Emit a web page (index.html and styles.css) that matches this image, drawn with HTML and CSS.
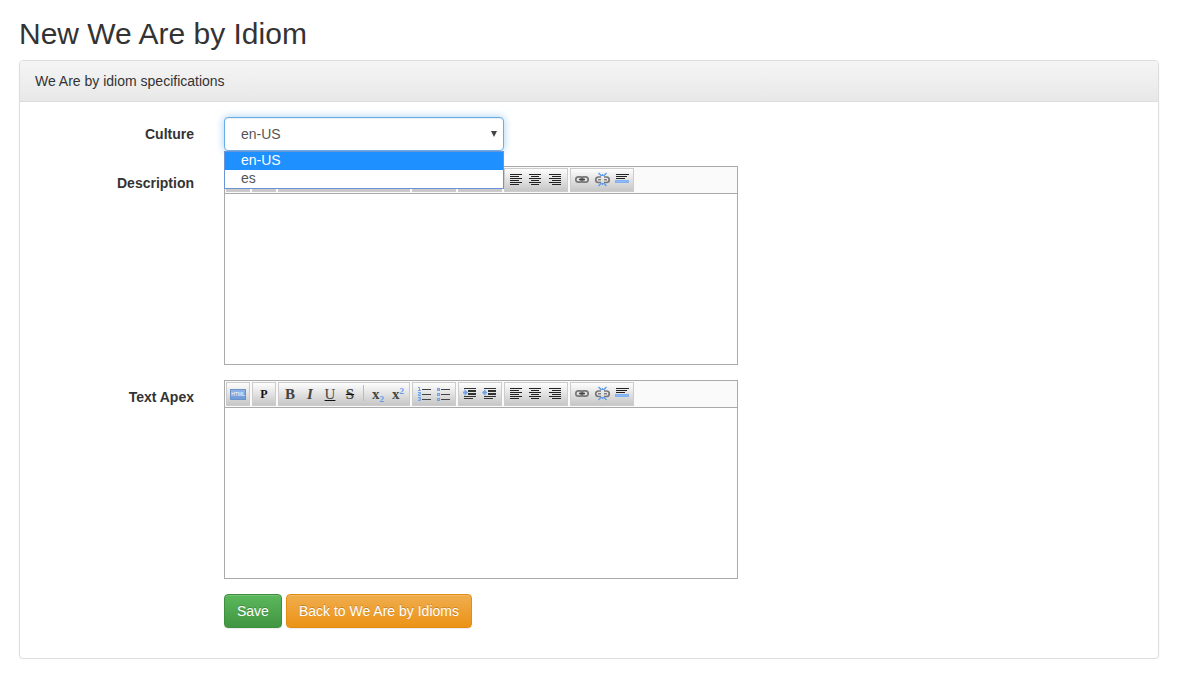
FILE: index.html
```
<!DOCTYPE html>
<html lang="en">
<head>
    <meta charset="UTF-8">
    <meta name="viewport" content="width=device-width, initial-scale=1.0">
    <title>New We Are by Idiom</title>
    <link rel="stylesheet" href="styles.css">
</head>
<body>
    <!-- Toolbar icons -->
    <svg class="icon-defs" aria-hidden="true">
        <symbol id="ol" viewBox="0 0 20 20">
            <path d="M8 5.5h9M8 10.5h9M8 15.5h9" stroke="#444"/>
            <path d="M4 3.5h1.500v3M4 6.500h3M4 8.500h2.500v1.500h-2v1.500h2.500M4 13.500h2.500v3h-2.500M4.500 15h2" fill="none" stroke="#6ea3e6"/>
        </symbol>
        <symbol id="ul" viewBox="0 0 20 20">
            <path d="M7 5.5h9M7 10.5h9M7 15.5h9" stroke="#444"/>
            <path d="M3 4h3v3h-3zM3 9h3v3h-3zM3 14h3v3h-3z" fill="#6ea3e6"/>
            <path d="M4 5h1v1h-1zM4 10h1v1h-1zM4 15h1v1h-1z" fill="#b5d0f4"/>
        </symbol>
        <symbol id="indent" viewBox="0 0 20 20">
            <path d="M4 4.500h12M4 12.500h12M4 14.500h9" stroke="#333"/>
            <path d="M8 7h8M8 10h8" stroke="#333" stroke-width="2"/>
            <path d="M3 7.500h1.500v-2.500l3.500 3.500l-3.500 3.500v-2.500h-1.500z" fill="#6ea3e6"/>
        </symbol>
        <symbol id="outdent" viewBox="0 0 20 20">
            <path d="M4 4.500h12M4 12.500h12M4 14.500h9" stroke="#333"/>
            <path d="M8 7h8M8 10h8" stroke="#333" stroke-width="2"/>
            <path d="M7 7.500h-1.500v-2.500l-3.500 3.500l3.500 3.500v-2.500h1.500z" fill="#6ea3e6"/>
        </symbol>
        <symbol id="left" viewBox="0 0 20 20">
            <path d="M4 4.500h12M4 6.500h9M4 8.500h12M4 10.500h9M4 12.500h12M4 14.500h9" stroke="#222"/>
        </symbol>
        <symbol id="center" viewBox="0 0 20 20">
            <path d="M3 4.500h12M5 6.500h8M3 8.500h12M5 10.500h8M3 12.500h12M5 14.500h8" stroke="#222"/>
        </symbol>
        <symbol id="right" viewBox="0 0 20 20">
            <path d="M3 4.500h12M6 6.500h9M3 8.500h12M6 10.500h9M3 12.500h12M6 14.500h9" stroke="#222"/>
        </symbol>
        <symbol id="link" viewBox="0 0 20 20">
            <rect x="3.800" y="6.800" width="7" height="5.400" rx="2.700" fill="none" stroke="#777" stroke-width="1.700"/>
            <rect x="9.200" y="6.800" width="7" height="5.400" rx="2.700" fill="none" stroke="#777" stroke-width="1.700"/>
            <path d="M7 9.500h6" stroke="#444" stroke-width="1.500"/>
        </symbol>
        <symbol id="unlink" viewBox="0 0 20 20">
            <path d="M9 7h-2.500a2.700 2.700 0 0 0 0 5.500h2.500M12 7h2.500a2.700 2.700 0 0 1 0 5.500h-2.500" fill="none" stroke="#777" stroke-width="1.700"/>
            <path d="M6 9.800h3M12 9.800h3" stroke="#555"/>
            <path d="M6.500 3l3 3M14.500 3l-3 3M10.500 4v2M6.500 16l3-3M14.500 16l-3-3M10.500 13v2" stroke="#5f9bea" stroke-width="1.400"/>
        </symbol>
        <symbol id="rule" viewBox="0 0 20 20">
            <path d="M4 4.500h13M4 6.500h11M4 8.500h9" stroke="#222"/>
            <path d="M3 10h14v3h-14z" fill="#7fb0f0"/>
            <path d="M4 11h12v1h-12z" fill="#8fbaf4"/>
        </symbol>
    </svg>

    <div class="container">
        <h1>New We Are by Idiom</h1>

        <div class="panel">
            <div class="panel-heading">We Are by idiom specifications</div>
            <form class="panel-body">
                <div class="form-group">
                    <label for="culture">Culture</label>
                    <div class="select-wrap">
                        <select id="culture">
                            <option selected>en-US</option>
                            <option>es</option>
                        </select>
                        <ul class="options">
                            <li class="active">en-US</li>
                            <li>es</li>
                        </ul>
                    </div>
                </div>

                <div class="form-group">
                    <label for="description">Description</label>
                    <div class="editor">
                        <div class="toolbar">
                            <div class="group">
                                <button type="button" title="View source"><span class="html">HTML</span></button>
                            </div>
                            <div class="group">
                                <button type="button" title="Paragraph" class="para">P</button>
                            </div>
                            <div class="group">
                                <button type="button" title="Bold"><b>B</b></button>
                                <button type="button" title="Italic"><i>I</i></button>
                                <button type="button" title="Underline"><u>U</u></button>
                                <button type="button" title="Strikethrough"><s>S</s></button>
                                <span class="separator"></span>
                                <button type="button" title="Subscript">x<sub>2</sub></button>
                                <button type="button" title="Superscript">x<sup>2</sup></button>
                            </div>
                            <div class="group">
                                <button type="button" title="Ordered list"><svg><use href="#ol"/></svg></button>
                                <button type="button" title="Unordered list"><svg><use href="#ul"/></svg></button>
                            </div>
                            <div class="group">
                                <button type="button" title="Indent"><svg><use href="#indent"/></svg></button>
                                <button type="button" title="Outdent"><svg><use href="#outdent"/></svg></button>
                            </div>
                            <div class="group">
                                <button type="button" title="Align left"><svg><use href="#left"/></svg></button>
                                <button type="button" title="Center"><svg><use href="#center"/></svg></button>
                                <button type="button" title="Align right"><svg><use href="#right"/></svg></button>
                            </div>
                            <div class="group">
                                <button type="button" title="Link"><svg><use href="#link"/></svg></button>
                                <button type="button" title="Unlink"><svg><use href="#unlink"/></svg></button>
                                <button type="button" title="Horizontal rule"><svg><use href="#rule"/></svg></button>
                            </div>
                        </div>
                        <textarea id="description"></textarea>
                    </div>
                </div>

                <div class="form-group">
                    <label for="textApex">Text Apex</label>
                    <div class="editor">
                        <div class="toolbar">
                            <div class="group">
                                <button type="button" title="View source"><span class="html">HTML</span></button>
                            </div>
                            <div class="group">
                                <button type="button" title="Paragraph" class="para">P</button>
                            </div>
                            <div class="group">
                                <button type="button" title="Bold"><b>B</b></button>
                                <button type="button" title="Italic"><i>I</i></button>
                                <button type="button" title="Underline"><u>U</u></button>
                                <button type="button" title="Strikethrough"><s>S</s></button>
                                <span class="separator"></span>
                                <button type="button" title="Subscript">x<sub>2</sub></button>
                                <button type="button" title="Superscript">x<sup>2</sup></button>
                            </div>
                            <div class="group">
                                <button type="button" title="Ordered list"><svg><use href="#ol"/></svg></button>
                                <button type="button" title="Unordered list"><svg><use href="#ul"/></svg></button>
                            </div>
                            <div class="group">
                                <button type="button" title="Indent"><svg><use href="#indent"/></svg></button>
                                <button type="button" title="Outdent"><svg><use href="#outdent"/></svg></button>
                            </div>
                            <div class="group">
                                <button type="button" title="Align left"><svg><use href="#left"/></svg></button>
                                <button type="button" title="Center"><svg><use href="#center"/></svg></button>
                                <button type="button" title="Align right"><svg><use href="#right"/></svg></button>
                            </div>
                            <div class="group">
                                <button type="button" title="Link"><svg><use href="#link"/></svg></button>
                                <button type="button" title="Unlink"><svg><use href="#unlink"/></svg></button>
                                <button type="button" title="Horizontal rule"><svg><use href="#rule"/></svg></button>
                            </div>
                        </div>
                        <textarea id="textApex"></textarea>
                    </div>
                </div>

                <div class="form-group">
                    <div class="actions">
                        <button type="submit" class="btn btn-success">Save</button>
                        <a href="#" class="btn btn-warning">Back to We Are by Idioms</a>
                    </div>
                </div>
            </form>
        </div>
    </div>
</body>
</html>
```
FILE: styles.css
```
* {
    box-sizing: border-box;
}
body {
    margin: 0;
    font-family: "Liberation Sans", Arial, sans-serif;
    font-size: 14px;
    line-height: 20px;
    color: #333;
    background-color: #fff;
}
.icon-defs {
    position: absolute;
    width: 0;
    height: 0;
}
.container {
    padding: 17px 20px 0 19px;
}
h1 {
    margin: 0 0 10px;
    font-size: 30px;
    font-weight: normal;
    line-height: 33px;
}
.panel {
    border: 1px solid #ddd;
    border-radius: 4px;
    box-shadow: 0 1px 2px rgba(0,0,0,0.05);
}
.panel-heading {
    padding: 10px 15px;
    border-bottom: 1px solid #ddd;
    border-radius: 3px 3px 0 0;
    background-image: linear-gradient(#f5f5f5, #e8e8e8);
}
.panel-body {
    padding: 15px 0;
}
.form-group {
    display: grid;
    grid-template-columns: 174px 1fr;
    column-gap: 30px;
    margin-bottom: 15px;
}
.form-group > div {
    grid-column: 2;
}
label {
    padding-top: 7px;
    font-weight: bold;
    text-align: right;
}

/* Culture drop-down */
.select-wrap {
    position: relative;
    width: 280px;
}
.select-wrap::after {
    content: "";
    position: absolute;
    top: 14px;
    right: 7px;
    border: 3px solid transparent;
    border-top: 6px solid #444;
    border-bottom: 0;
}
select {
    display: block;
    width: 100%;
    height: 34px;
    padding: 6px 16px;
    border: 1px solid #66afe9;
    border-radius: 4px;
    background-color: #fff;
    box-shadow: inset 0 1px 1px rgba(0,0,0,0.075), 0 0 8px rgba(102,175,233,0.6);
    color: #555;
    font: inherit;
    appearance: none;
    outline: none;
}
.options {
    position: absolute;
    top: 34px;
    left: 0;
    z-index: 1;
    width: 100%;
    margin: 0;
    padding: 0;
    border: 1px solid #6b93d6;
    background-color: #fff;
    color: #555;
    line-height: 16px;
    list-style: none;
}
.options li {
    padding: 0 16px 2px;
}
.options .active {
    background-color: #1e90ff;
    color: #fff;
}

/* Rich text editor */
.editor {
    width: 514px;
    border: 1px solid #aaa;
}
.toolbar {
    display: flex;
    gap: 2px;
    padding: 1px;
    border-bottom: 1px solid #aaa;
    background-color: #fafafa;
}
.group {
    display: flex;
    padding: 1px;
    border: 1px solid #ccc;
    background-image: linear-gradient(#fdfdfd, #c6c6c6);
}
.group button {
    width: 20px;
    height: 20px;
    padding: 0;
    border: 0;
    background: none;
    color: #444;
    font: bold 15px/20px "Liberation Serif", serif;
    white-space: nowrap;
}
.group .para {
    color: #111;
    font-size: 12px;
}
.group svg {
    display: block;
    width: 20px;
    height: 20px;
}
.group u {
    font-weight: normal;
    text-decoration-color: #111;
}
.group s {
    text-decoration-color: #111;
}
.group sub,
.group sup {
    color: #5f9bea;
    font-size: 9px;
    line-height: 0;
}
.group sub {
    vertical-align: -3px;
}
.group sup {
    vertical-align: 5px;
}
.html {
    display: block;
    width: 16px;
    margin: 1px auto 0;
    border: 1px solid #6a93cc;
    background-image: linear-gradient(#8fb4e6, #6f9cd8);
    color: #fff;
    font: 5px/9px "Liberation Sans", Arial, sans-serif;
    text-align: center;
}
.separator {
    width: 1px;
    height: 16px;
    margin: 1px 4px 0 3px;
    background-color: #bbb;
}
textarea {
    display: block;
    width: 100%;
    height: 170px;
    padding: 8px;
    border: 0;
    background-color: #fff;
    font: inherit;
    resize: none;
    outline: none;
}

/* Buttons */
.actions {
    display: flex;
    gap: 4px;
}
.btn {
    padding: 6px 12px;
    border: 1px solid;
    border-radius: 4px;
    box-shadow: inset 0 1px 0 rgba(255,255,255,0.15), 0 1px 1px rgba(0,0,0,0.075);
    color: #fff;
    font: inherit;
    text-decoration: none;
    text-shadow: 0 -1px 0 rgba(0,0,0,0.2);
    cursor: pointer;
}
.btn-success {
    border-color: #3e8f3e;
    background-image: linear-gradient(#5cb85c, #419641);
}
.btn-warning {
    border-color: #e38d13;
    background-image: linear-gradient(#f0ad4e, #eb9316);
}
```
